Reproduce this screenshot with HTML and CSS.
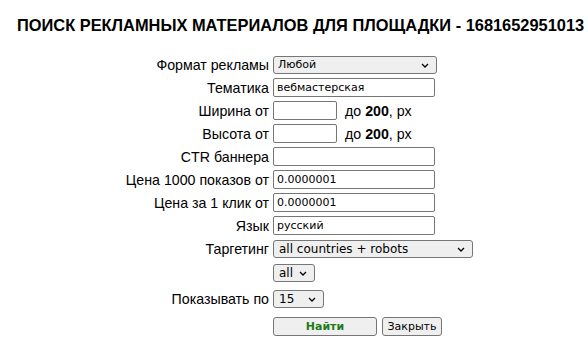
FILE: index.html
```html
<!DOCTYPE html>
<html>
<head>
<meta charset="utf-8">
<link rel="stylesheet" href="styles.css">
</head>
<body>
<h1 class="title">ПОИСК РЕКЛАМНЫХ МАТЕРИАЛОВ ДЛЯ ПЛОЩАДКИ - 1681652951013</h1>
<form class="form">
  <div class="row"><label class="lbl">Формат рекламы</label><span class="selwrap sel-format"><select class="ctl"><option>Любой</option></select><svg class="chev" width="8" height="5" viewBox="0 0 8 5"><path d="M1 1 L4 4 L7 1" fill="none" stroke="#000" stroke-width="1.3"/></svg></span></div>
  <div class="row"><label class="lbl">Тематика</label><input class="ctl inp-wide" type="text" value="вебмастерская"></div>
  <div class="row"><label class="lbl">Ширина от</label><input class="ctl inp-small" type="text"><span class="unit">до <b>200</b>, px</span></div>
  <div class="row"><label class="lbl">Высота от</label><input class="ctl inp-small" type="text"><span class="unit">до <b>200</b>, px</span></div>
  <div class="row"><label class="lbl">CTR баннера</label><input class="ctl inp-wide" type="text"></div>
  <div class="row"><label class="lbl">Цена 1000 показов от</label><input class="ctl inp-wide" type="text" value="0.0000001"></div>
  <div class="row"><label class="lbl">Цена за 1 клик от</label><input class="ctl inp-wide" type="text" value="0.0000001"></div>
  <div class="row"><label class="lbl">Язык</label><input class="ctl inp-wide" type="text" value="русский"></div>
  <div class="row"><label class="lbl">Таргетинг</label><span class="selwrap sel-target"><select class="ctl big"><option>all countries + robots</option></select><svg class="chev" width="8" height="5" viewBox="0 0 8 5"><path d="M1 1 L4 4 L7 1" fill="none" stroke="#000" stroke-width="1.3"/></svg></span></div>
  <div class="row row-all"><span class="lbl"></span><span class="selwrap sel-all"><select class="ctl big"><option>all</option></select><svg class="chev" width="8" height="5" viewBox="0 0 8 5"><path d="M1 1 L4 4 L7 1" fill="none" stroke="#000" stroke-width="1.3"/></svg></span></div>
  <div class="row row-show"><label class="lbl">Показывать по</label><span class="selwrap sel-num"><select class="ctl big"><option>15</option></select><svg class="chev" width="8" height="5" viewBox="0 0 8 5"><path d="M1 1 L4 4 L7 1" fill="none" stroke="#000" stroke-width="1.3"/></svg></span></div>
  <div class="row row-btn"><span class="lbl"></span><button type="button" class="btn btn-find">Найти</button><button type="button" class="btn btn-close">Закрыть</button></div>
</form>
</body>
</html>
```
FILE: styles.css
```css
html, body {
  margin: 0;
  padding: 0;
  background: #ffffff;
}
body {
  font-family: "Liberation Sans", Arial, sans-serif;
  color: #000;
  width: 588px;
  height: 348px;
  overflow: hidden;
}
.title {
  margin: 0;
  box-sizing: border-box;
  height: 53px;
  padding: 16px 0 0 17px;
  font-size: 16.4px;
  font-weight: bold;
  line-height: 18px;
  white-space: nowrap;
}
.form {
  display: flex;
  flex-direction: column;
}
.row {
  display: flex;
  align-items: center;
  height: 23px;
}
.row-all { height: 25px; }
.row-show { height: 27px; }
.row-btn { height: 28px; }
.lbl {
  width: 273px;
  text-align: right;
  padding-right: 4px;
  box-sizing: border-box;
  font-size: 14.2px;
  flex: none;
}
.ctl {
  font-family: "DejaVu Sans", Verdana, sans-serif;
  font-size: 11px;
  box-sizing: border-box;
  margin: 0;
  color: #000;
}
input.ctl {
  height: 19px;
  border: 1px solid #767676;
  border-radius: 2px;
  padding: 0 3px;
  background: #fff;
}
.selwrap {
  position: relative;
  display: inline-flex;
  height: 18px;
}
.selwrap select {
  -webkit-appearance: none;
  appearance: none;
  width: 100%;
  height: 18px;
  border: 1px solid #767676;
  border-radius: 3px;
  background: #efefef;
  padding: 0 14px 0 4px;
  outline: none;
}
.selwrap select.big { font-size: 12px; padding-left: 5px; }
.chev {
  position: absolute;
  right: 8px;
  top: 7px;
  pointer-events: none;
}
.sel-format { width: 164px; }
.inp-wide { width: 162px; }
.inp-small { width: 64px; }
.sel-target { width: 200px; }
.sel-all { width: 42px; }
.sel-num { width: 51px; }
.unit {
  font-size: 14.2px;
  margin-left: 8px;
}
.btn {
  height: 19px;
  box-sizing: border-box;
  border: 1px solid #767676;
  border-radius: 3px;
  background: #efefef;
  font-family: "DejaVu Sans", Verdana, sans-serif;
  font-size: 11px;
  padding: 0;
  margin: 0;
}
.btn-find {
  width: 104px;
  font-weight: bold;
  color: #1e7b1e;
}
.btn-close {
  width: 60px;
  margin-left: 5px;
  color: #000;
}
```
